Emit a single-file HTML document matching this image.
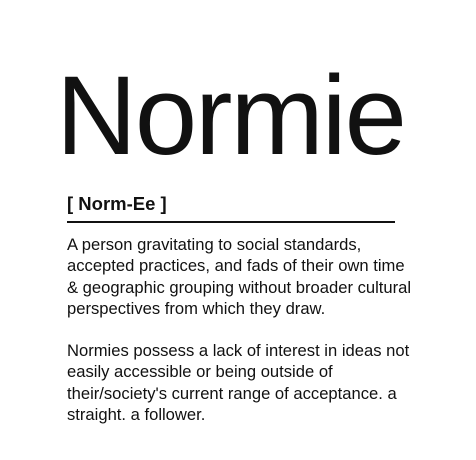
<!DOCTYPE html>
<html><head><style>
html,body{margin:0;padding:0;background:#fff;width:476px;height:460px;overflow:hidden}
body{position:relative;font-family:"Liberation Sans",sans-serif;color:#111}
.t{position:absolute;left:56px;top:60px;font-size:112px;letter-spacing:-2px;line-height:1;white-space:nowrap}
.p{position:absolute;left:67px;top:193px;font-size:18.5px;font-weight:bold;white-space:nowrap}
.hr{position:absolute;left:67px;top:221px;width:328px;height:2px;background:#111}
.b{position:absolute;left:67px;font-size:16.6px;line-height:21.3px;white-space:nowrap}
</style></head><body>
<div class="t">Normie</div>
<div class="p">[ Norm-Ee ]</div>
<div class="hr"></div>
<div class="b" style="top:234px">A person gravitating to social standards,<br>accepted practices, and fads of their own time<br>&amp; geographic grouping without broader cultural<br>perspectives from which they draw.</div>
<div class="b" style="top:340px">Normies possess a lack of interest in ideas not<br>easily accessible or being outside of<br>their/society's current range of acceptance. a<br>straight. a follower.</div>
</body></html>
